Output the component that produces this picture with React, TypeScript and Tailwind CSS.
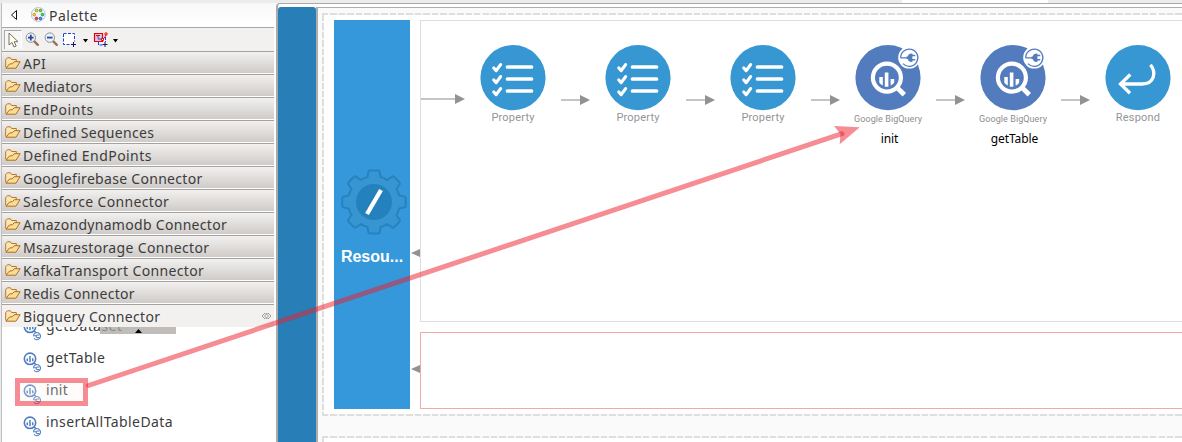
import React from "react";

const sections: [string, string][] = [
  ["API", "tracking-[0.3px]"],
  ["Mediators", "tracking-[0.3px]"],
  ["EndPoints", "tracking-[0.52px]"],
  ["Defined Sequences", "tracking-[0.3px]"],
  ["Defined EndPoints", "tracking-[0.44px]"],
  ["Googlefirebase Connector", "tracking-[0.3px]"],
  ["Salesforce Connector", "tracking-[0.34px]"],
  ["Amazondynamodb Connector", "tracking-[0.3px]"],
  ["Msazurestorage Connector", "tracking-[0.34px]"],
  ["KafkaTransport Connector", "tracking-[0.36px]"],
  ["Redis Connector", "tracking-[0.27px]"],
];

const ui = "font-['Noto_Sans',sans-serif] text-[14px] text-[#3c3c3c] whitespace-nowrap";

function Folder() {
  return (
    <svg width="16" height="12" viewBox="0 0 16 12" className="shrink-0">
      <path d="M.7 10.5V2.6L2.4.8h3l1.2 1.7h4.7v2.2" fill="#fbe7b5" stroke="#b9772c" />
      <path d="M1 11.2 4.5 7l3-.3 1.7-2h5.9L11 11.2Z" fill="#fbdc93" stroke="#b06d20" strokeLinejoin="round" />
    </svg>
  );
}

function Magnify({ minus = false }: { minus?: boolean }) {
  return (
    <svg width="15" height="15" viewBox="0 0 15 15" className="shrink-0">
      <path d="m9.3 9.3 3.5 3.5" stroke="#967457" strokeWidth="2.4" strokeLinecap="round" />
      <circle cx="5.8" cy="5.6" r="4.7" fill="#eaf3fb" stroke="#8b9199" />
      <path d={minus ? "M3 5.6h5.6" : "M3 5.6h5.6M5.8 2.8v5.6"} stroke="#2d4793" strokeWidth="1.8" />
    </svg>
  );
}

function QueryIcon() {
  return (
    <svg width="20" height="21" viewBox="0 0 20 21" className="shrink-0">
      <circle cx="7" cy="6.8" r="5.7" fill="#fff" stroke="#507cbf" strokeWidth="1.6" />
      <path d="M4.3 6.5v2.8M7 4v6.3M9.7 6.3v3" stroke="#507cbf" strokeWidth="1.5" />
      <path d="m11 10.8 2 2" stroke="#507cbf" strokeWidth="1.6" />
      <circle cx="14" cy="16.3" r="3.9" fill="#fff" />
      <path d="M10.4 15.4A3.6 3.6 0 1 1 11 18.300" fill="none" stroke="#507cbf" strokeWidth="1.100" />
      <path d="M10 15.700h3.500M16.500 15h-2q-1.500.1-1.500 1.300t1.500 1.300h2" fill="none" stroke="#507cbf" strokeWidth="1.100" />
    </svg>
  );
}

function Entry({ name, tracking }: { name: string; tracking: string }) {
  return (
    <div className="flex h-8 shrink-0 pl-[21px]">
      <div className="pt-[9px]"><QueryIcon /></div>
      <span className={`${ui} ${tracking} ml-[3px] leading-[30px]`}>{name}</span>
    </div>
  );
}

function Arrow({ long = false }: { long?: boolean }) {
  const w = long ? 44 : 29;
  return (
    <svg width={w} height="10" viewBox={`0 0 ${w} 10`} className="shrink-0">
      <path d={`M0 5H${w - 9}`} stroke="#c5c5c5" strokeWidth="2" />
      <path d={`M${w - 10} 0v10L${w} 5Z`} fill="#929292" />
    </svg>
  );
}

function Property() {
  return (
    <svg width="66" height="66" viewBox="0 0 66 66">
      <circle cx="33" cy="32.700" r="32.600" fill="#3797d3" />
      {[22, 34, 46].map((y) => (
        <g key={y} stroke="#fff" fill="none" strokeLinecap="round" strokeLinejoin="round">
          <path d={`M13.8 ${y + 1}l2.4 2.6 4.400-6`} strokeWidth="3.2" />
          <path d={`M27.500 ${y}h24`} strokeWidth="3.700" />
        </g>
      ))}
    </svg>
  );
}

function BigQuery() {
  return (
    <svg width="66" height="66" viewBox="0 0 66 66">
      <circle cx="33" cy="32.700" r="32.600" fill="#537cbf" />
      <circle cx="31.900" cy="32.600" r="14" fill="none" stroke="#fff" strokeWidth="4.2" />
      <path d="m42 42.500 7.300 7.300" stroke="#fff" strokeWidth="4.800" />
      <path d="M24.300 32h3.500v8.600q-2.300-1.200-3.500-3.200ZM29.800 27.600h3.600v14.200h-3.600ZM35.600 34h3.600v3.400q-1.200 2-3.600 3.200Z" fill="#fff" />
      <circle cx="54.200" cy="12.600" r="11" fill="#fff" />
      <path d="M45.700 13A8.600 8.600 0 1 1 48 18.600M45.500 12.900h7.500" fill="none" stroke="#537cbf" strokeWidth="1.300" />
      <path d="M51.500 11.500h1.200q.8-3 3.900-3h.8v8.400h-.8q-3.100 0-3.900-3h-1.200Z" fill="#537cbf" />
      <path d="M57 10.500h3.200M57 14.800h3.200" stroke="#537cbf" strokeWidth="1.600" />
    </svg>
  );
}

function Respond() {
  return (
    <svg width="66" height="66" viewBox="0 0 66 66">
      <circle cx="33" cy="32.700" r="32.600" fill="#3797d3" />
      <path d="M45.500 19.800c6 7.800 4 19.200-8.500 19.200H15.500M25.300 29.500 15.500 39l9.500 9.300" fill="none" stroke="#fff" strokeWidth="3.300" />
    </svg>
  );
}

function Node({ kind, label, name }: { kind: "p" | "b" | "r"; label: string; name?: string }) {
  return (
    <div className="flex w-[66px] shrink-0 flex-col items-center whitespace-nowrap">
      {kind === "p" ? <Property /> : kind === "b" ? <BigQuery /> : <Respond />}
      <span className={kind === "b"
        ? "font-[Roboto,sans-serif] text-[9px] leading-[16px] tracking-[0.08px] text-[#8b8d90]"
        : "font-[Roboto,sans-serif] text-[11px] leading-[14px] tracking-[0.2px] text-[#939598]"}>{label}</span>
      {name && <span className="ml-[3px] mt-[4px] font-['Noto_Sans',sans-serif] text-[12px] leading-[16px] tracking-[-0.1px] text-black">{name}</span>}
    </div>
  );
}

function Gear() {
  return (
    <svg width="66" height="66" viewBox="0 0 66 66" className="ml-[3px]">
      <path d="M28.500 1.500h9q1 0 1.200 1.500l.8 5q3.500.8 6.500 3l5-3.500q1-.6 2 .3l5.500 5.500q.8.900.2 1.900L55.500 20q2 3 2.700 6.500l5 .9q1.500.2 1.500 1.500v8.200q0 1.200-1.500 1.500l-5 .9q-.7 3.500-2.700 6.500l3.200 4.800q.6 1-.2 1.900L53 58.200q-1 .9-2 .3L46 55q-3 2.200-6.500 3l-.8 5q-.2 1.500-1.200 1.500h-9q-1 0-1.200-1.500l-.8-5q-3.500-.8-6.500-3l-5 3.500q-1 .6-2-.3l-5.500-5.500q-.8-.9-.2-1.900L10.500 46q-2-3-2.700-6.500l-5-.9q-1.500-.3-1.500-1.500v-8.200q0-1.300 1.500-1.500l5-.9Q8.500 23 10.500 20l-3.200-4.800q-.6-1 .2-1.900L13 7.800q1-.9 2-.3l5 3.500q3-2.200 6.500-3l.8-5q.2-1.500 1.200-1.500Z" fill="#3795d1" stroke="#2583bf" strokeWidth="2" strokeLinejoin="round" />
      <circle cx="33" cy="33" r="18" fill="#2581bc" />
      <path d="m26 45 14-24" stroke="#fff" strokeWidth="4.300" />
    </svg>
  );
}

const dashX = "bg-[repeating-linear-gradient(90deg,#dedede_0px,#dedede_6.4px,#f7f7f7_6.400px,#f7f7f7_8.450px)]";
const dashY = "bg-[repeating-linear-gradient(180deg,#dedede_0px,#dedede_6.4px,#f7f7f7_6.400px,#f7f7f7_8.450px)]";

export default function App() {
  return (
    <div className="relative flex h-[442px] w-[1182px] flex-col overflow-hidden bg-white">
      <div className="flex h-[3px] shrink-0">
        <div className="w-[902px] bg-[#ececec]" />
        <div className="w-[146px] bg-white" />
        <div className="flex-1 bg-[#ececec]" />
      </div>
      <div className="flex min-h-0 flex-1">
        <div className="w-[2px] shrink-0 border-r border-[#bdbdc2] bg-[#ececec]" />
        <div className="flex w-[274px] shrink-0 flex-col">
          <div className="flex h-[24px] shrink-0 items-center bg-gradient-to-b from-[#f8f8f8] to-white pl-[8px]">
            <svg width="9" height="12" viewBox="0 0 9 12"><path d="M6.500 1.500v9L1.500 6Z" fill="#fff" stroke="#111" /></svg>
            <svg className="ml-[12px]" width="16" height="16" viewBox="0 0 16 16">
              <circle cx="7.300" cy="7.500" r="7" fill="#eef5fa" stroke="#b5c9dc" />
              <g strokeWidth="1"><circle cx="5.500" cy="3.500" r="1.300" fill="#d6e36b" stroke="#8b9e16" /><circle cx="9.500" cy="3.500" r="1.300" fill="#95c94c" stroke="#5b9424" /><circle cx="11.500" cy="7.600" r="1.300" fill="#5fc86a" stroke="#2d9b3b" /><circle cx="9.500" cy="11.500" r="1.300" fill="#5f8ee6" stroke="#2456b8" /><circle cx="5.500" cy="11.500" r="1.300" fill="#f05050" stroke="#c32121" /><circle cx="3.200" cy="7.600" r="1.300" fill="#ffc845" stroke="#d6911a" /></g>
            </svg>
            <span className={`${ui} ml-[2px] tracking-[0.42px]`}>Palette</span>
          </div>
          <div className="flex h-[24px] w-[272px] shrink-0 items-center border-t border-[#a9a6a3] bg-[#f2f1f0] pl-[2px]">
            <div className="flex h-[19px] w-[18px] items-center justify-center border-l border-t border-r border-l-[#aaa] border-t-[#aaa] border-r-white bg-[#f7f7f6] pl-px">
              <svg width="11" height="16" viewBox="0 0 11 16"><path d="M1 1v12l3-2.500 2 4.500 2.200-1-2-4.300H10Z" fill="#fffde9" stroke="#77736b" /></svg>
            </div>
            <div className="ml-[3px]"><Magnify /></div>
            <div className="ml-[4px]"><Magnify minus /></div>
            <svg className="ml-[3px]" width="15" height="15" viewBox="0 0 15 15"><path d="M1.500 1.500h11v11h-11Z" fill="#fff" stroke="#1742dd" strokeDasharray="3 1.500" /><path d="M8.500 9.500h6v5h-6Z" fill="#f2f1f0" /><path d="M9 12.500h5M11.500 10v5" stroke="#1b1464" /></svg>
            <svg className="ml-[6px] mt-[2px]" width="5" height="4"><path d="M0 0h5L2.500 3.500Z" fill="#000" /></svg>
            <svg className="ml-[5px]" width="16" height="15" viewBox="0 0 16 15"><path d="M1.500 1.500h8v8h-8Z" fill="#c9cdf5" stroke="#f00000" strokeWidth="1.200" /><path d="M5 7h6M5.500 10v3h4M12.500 5v5" stroke="#1742dd" strokeDasharray="3 1" fill="none" /><path d="M3 3.500h4M5 3.500v3M9 7l2-.5 2-3.500" stroke="#f00" fill="none" /><path d="M12 1h2v2h-2ZM8.500 6.500h2v2h-2Z" fill="#fff" stroke="#f00" /><path d="M9.500 12.500h5M12 10v5" stroke="#1b1464" /></svg>
            <svg className="ml-[4px] mt-[2px]" width="5" height="4"><path d="M0 0h5L2.500 3.500Z" fill="#000" /></svg>
          </div>
          {sections.map(([s, t]) => (
            <div key={s} className="flex h-[23px] w-[272px] shrink-0 items-center border-b border-t border-b-white border-t-[#a4a1a0] bg-gradient-to-b from-[#f2f1f0] to-[#cfcbc8] pl-[3px]">
              <Folder />
              <span className={`${ui} ${t} ml-[2px] mt-[2px] leading-[21px]`}>{s}</span>
            </div>
          ))}
          <div className="flex h-[23px] w-[272px] shrink-0 items-center border-t border-[#a4a1a0] bg-[#f2f1f0] pl-[3px]">
            <Folder />
            <span className={`${ui} ml-[2px] leading-[21px] tracking-[0.32px]`}>Bigquery Connector</span>
            <svg className="ml-auto mr-[2px]" width="11" height="8" viewBox="0 0 11 8"><path d="M4 1 1 4l3 3M7 1l3 3-3 3M6.500 1l-3 3 3 3M4.500 1l3 3-3 3" fill="none" stroke="#777" strokeWidth=".7" /></svg>
          </div>
          <div className="relative flex min-h-0 flex-1 flex-col overflow-hidden">
            <div className="-mt-[16px] flex flex-col">
              <Entry name="getDataset" tracking="tracking-[0.4px]" />
              <Entry name="getTable" tracking="tracking-[0.4px]" />
              <Entry name="init" tracking="tracking-[0.3px]" />
              <Entry name="insertAllTableData" tracking="tracking-[0.42px]" />
            </div>
            <div className="absolute left-[98px] top-0 flex h-[7px] w-[76px] items-center justify-center bg-[#aaa6a1]/75">
              <svg width="7" height="4"><path d="M0 4h7L3.500 0Z" fill="#000" /></svg>
            </div>
          </div>
        </div>
        <div className="flex min-w-0 flex-1 flex-col rounded-tl border-l-2 border-t border-[#aaaaaa] bg-white pt-[3px]">
          <div className="flex min-h-0 flex-1">
            <div className="w-[38px] shrink-0 rounded-t-[3px] bg-[#287eb7]" />
            <div className="flex min-w-0 flex-1 flex-col border-l-2 border-t border-[#adadad] bg-[#fafafa] pl-[4px] pt-[5px]">
              <div className={`${dashX} h-[2px] shrink-0`} />
              <div className="flex h-[399px] shrink-0">
                <div className={`${dashY} w-[2px] shrink-0`} />
                <div className="flex flex-1 bg-white pl-[10px] pt-[5px]">
                  <div className="flex h-[389px] w-[76px] shrink-0 flex-col items-center bg-[#3598db] pt-[149px]">
                    <Gear />
                    <span className="mt-[12px] font-['Liberation_Sans',sans-serif] text-[16px] font-bold leading-[20px] text-white">Resou...</span>
                  </div>
                  <div className="flex w-[10px] shrink-0 flex-col items-end pt-[229px]">
                    <svg width="9" height="8"><path d="M9 0v8L0 4Z" fill="#929292" /></svg>
                    <svg className="mt-[108px]" width="9" height="8"><path d="M9 0v8L0 4Z" fill="#929292" /></svg>
                  </div>
                  <div className="flex min-w-0 flex-1 flex-col">
                    <div className="flex h-[302px] shrink-0 items-start border-y border-l border-[#dedede] pt-[24px]">
                      <div className="flex w-[59px] shrink-0 pt-[49px]"><Arrow long /></div>
                      {(["p", "p", "p", "b", "b", "r"] as const).map((k, i) => (
                        <React.Fragment key={i}>
                          {i > 0 && <div className="flex w-[59px] shrink-0 pl-[15px] pt-[50px]"><Arrow /></div>}
                          <Node kind={k} label={k === "p" ? "Property" : k === "b" ? "Google BigQuery" : "Respond"} name={i === 3 ? "init" : i === 4 ? "getTable" : undefined} />
                        </React.Fragment>
                      ))}
                    </div>
                    <div className="mt-[10px] h-[77px] shrink-0 border-y border-l border-[#f0aaa6]" />
                  </div>
                </div>
              </div>
              <div className={`${dashX} h-[2px] shrink-0`} />
              <div className={`${dashX} mt-[20px] h-[2px] shrink-0`} />
              <div className="flex h-[6px] shrink-0"><div className={`${dashY} w-[2px]`} /><div className="flex-1 bg-white" /></div>
            </div>
          </div>
        </div>
      </div>
      <svg className="pointer-events-none absolute inset-0" width="1182" height="442" viewBox="0 0 1182 442">
        <path d="M17.500 380.500h68v23h-68Z" fill="#f7f5ef" fillOpacity=".25" stroke="#ed1c2a" strokeOpacity=".5" strokeWidth="5" />
        <path d="M88.500 385.500 842 133.700" fill="none" stroke="#ed1c2a" strokeOpacity=".5" strokeWidth="5" strokeLinecap="round" />
        <path d="M859.800 127.200 834 126l6.500 8-.8 10.200Z" fill="#ed1c2a" fillOpacity=".5" />
      </svg>
    </div>
  );
}
